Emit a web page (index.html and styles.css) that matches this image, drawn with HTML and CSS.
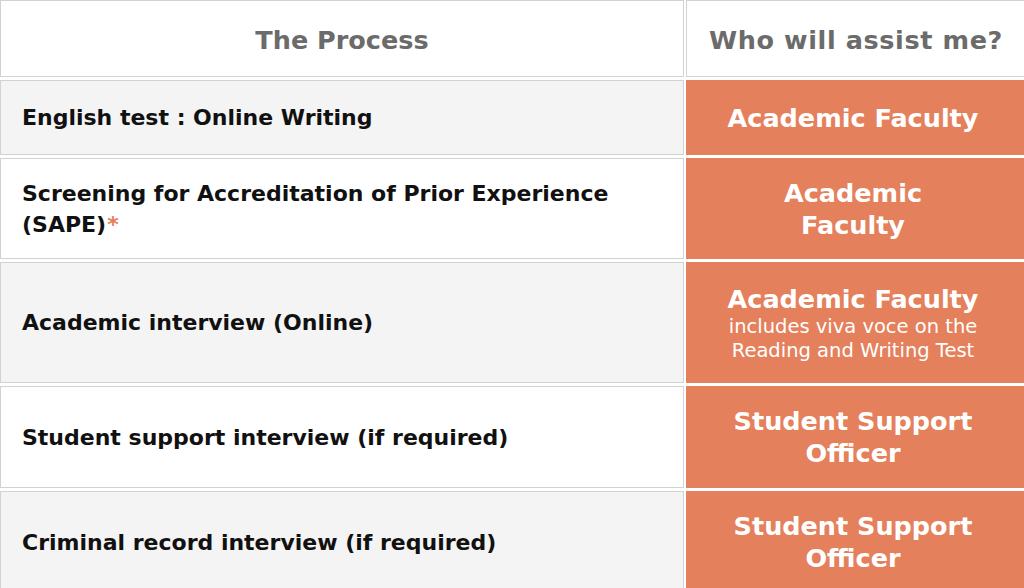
FILE: index.html
```html
<!DOCTYPE html>
<html lang="en">
<head>
<meta charset="utf-8">
<title>The Process</title>
<link rel="stylesheet" href="styles.css">
</head>
<body>
<div class="table">
  <div class="cell head"><span>The Process</span></div>
  <div class="cell head"><span class="wide">Who will assist me?</span></div>

  <div class="cell step alt"><p>English test : Online Writing</p></div>
  <div class="cell who"><p>Academic Faculty</p></div>

  <div class="cell step"><p>Screening for Accreditation of Prior Experience (SAPE)<span class="star">*</span></p></div>
  <div class="cell who"><p>Academic<br>Faculty</p></div>

  <div class="cell step alt"><p>Academic interview (Online)</p></div>
  <div class="cell who"><p>Academic Faculty</p><p class="note">includes viva voce on the<br>Reading and Writing Test</p></div>

  <div class="cell step"><p>Student support interview (if required)</p></div>
  <div class="cell who"><p>Student Support<br>Officer</p></div>

  <div class="cell step alt"><p>Criminal record interview (if required)</p></div>
  <div class="cell who"><p>Student Support<br>Officer</p></div>
</div>
</body>
</html>
```

FILE: styles.css
```css
html, body {
  margin: 0;
  padding: 0;
  background: #ffffff;
  overflow: hidden;
}
body {
  width: 1024px;
  height: 588px;
  font-family: "DejaVu Sans", Verdana, sans-serif;
}
p {
  margin: 0;
}
.table {
  display: grid;
  grid-template-columns: 684px 340px;
  grid-template-rows: 77px 75px 101px 121px 102px 102px;
  column-gap: 2px;
  row-gap: 3px;
  width: 1026px;
}
.cell {
  box-sizing: border-box;
  border: 1px solid #d2d2d2;
  display: flex;
  flex-direction: column;
  justify-content: center;
}
.head {
  align-items: center;
  background: #fff;
  color: #6b6b6b;
  font-weight: 700;
  font-size: 25.5px;
  padding-top: 2px;
}
.head .wide {
  letter-spacing: 0.6px;
}
.step {
  padding: 0 21px;
  background: #fff;
  color: #111;
  font-weight: 700;
  font-size: 22px;
  line-height: 31px;
}
.step.alt {
  background: #f4f4f4;
}
.star {
  color: #e5805c;
  margin-left: 1px;
}
.who {
  background: #e5805c;
  border-color: #e5805c;
  color: #fff;
  font-weight: 700;
  font-size: 25.5px;
  line-height: 32px;
  text-align: center;
  align-items: center;
  padding: 0 6px 0 0;
}
.note {
  font-weight: 400;
  font-size: 19.5px;
  line-height: 24px;
}
```
